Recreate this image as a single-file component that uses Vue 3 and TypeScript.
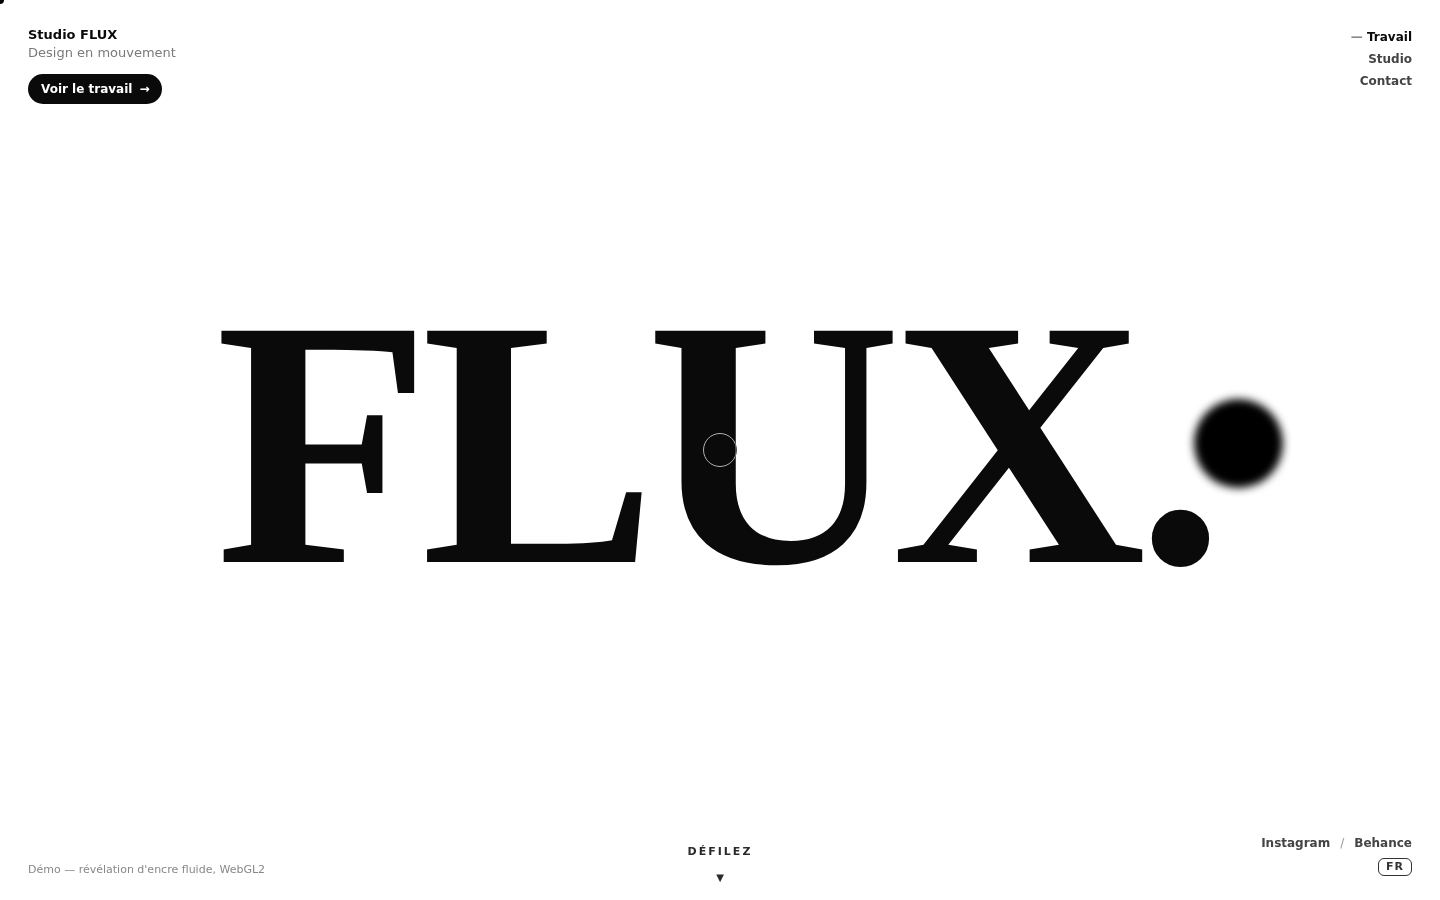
<script setup lang="ts">
import { ref } from 'vue'

interface Item { label: string; href: string }
const sections: Item[] = [
  { label: 'Travail', href: '#travail' },
  { label: 'Studio', href: '#studio' },
  { label: 'Contact', href: '#contact' },
]
const active = ref('Travail')
</script>

<template>
  <main class="page">
    <header class="top">
      <div class="brand">
        <strong class="name">Studio FLUX</strong>
        <span class="tagline">Design en mouvement</span>
        <a class="cta" href="#travail">Voir le travail <span>→</span></a>
      </div>
      <nav class="menu" aria-label="Sections">
        <a
          v-for="item in sections"
          :key="item.label"
          :href="item.href"
          :class="{ active: item.label === active }"
          @click="active = item.label"
        >{{ item.label }}</a>
      </nav>
    </header>

    <h1 class="word">FLUX.</h1>

    <footer class="bottom">
      <p class="note">Démo — révélation d'encre fluide, WebGL2</p>
      <a class="scroll" href="#travail"><span class="label">DÉFILEZ</span><span class="arrow">▼</span></a>
      <div class="end">
        <div class="social">
          <a href="#instagram">Instagram</a><span class="slash">/</span><a href="#behance">Behance</a>
        </div>
        <button class="lang" type="button">FR</button>
      </div>
    </footer>

    <div class="ink" aria-hidden="true"></div>
    <div class="ring" aria-hidden="true"></div>
    <div class="dot" aria-hidden="true"></div>
  </main>
</template>

<style>
body {
  margin: 0;
  background: #fff;
}
</style>

<style scoped>
.page {
  position: relative;
  display: grid;
  grid-template-rows: 1fr auto 1fr;
  box-sizing: border-box;
  min-height: 100vh;
  padding: 24px 28px 15px;
  overflow: hidden;
  background: #fff;
  font-family: "DejaVu Sans", sans-serif;
  color: #0a0a0a;
}
a {
  color: inherit;
  text-decoration: none;
}
.top {
  display: flex;
  justify-content: space-between;
  align-items: flex-start;
}
.brand {
  display: flex;
  flex-direction: column;
  align-items: flex-start;
  padding-top: 2px;
  font-size: 13px;
  line-height: 18px;
}
.tagline { color: #7a7a7a; }
.cta {
  display: flex;
  gap: 7px;
  margin-top: 12px;
  padding: 6px 13px;
  border-radius: 15px;
  background: #0a0a0a;
  color: #fff;
  font-size: 12px;
  font-weight: 700;
}
.menu {
  display: flex;
  flex-direction: column;
  align-items: flex-end;
  gap: 4px;
  padding-top: 4px;
  font-size: 12px;
  line-height: 18px;
  font-weight: 700;
  color: #444;
}
.active { color: #0a0a0a; }
.active::before {
  content: "— ";
  color: #888;
}
.word {
  justify-self: center;
  margin: 0;
  padding: 0 10px 23px 0;
  font-family: "Liberation Serif", serif;
  font-size: 353px;
  line-height: 352px;
  font-weight: 700;
  letter-spacing: -10px;
}
.bottom {
  display: grid;
  grid-template-columns: 1fr auto 1fr;
  align-items: end;
}
.note {
  margin: 0;
  padding-bottom: 8px;
  font-size: 11px;
  line-height: 14px;
  color: #888;
}
.scroll {
  display: flex;
  flex-direction: column;
  align-items: center;
  gap: 12px;
  font-size: 11px;
  line-height: 14px;
  font-weight: 700;
  color: #2a2a2a;
}
.label { letter-spacing: 2px; }
.arrow { font-size: 10px; }
.end {
  display: flex;
  flex-direction: column;
  align-items: flex-end;
  gap: 6px;
  padding-bottom: 9px;
}
.social {
  display: flex;
  gap: 10px;
  font-size: 12px;
  line-height: 18px;
  font-weight: 700;
  color: #444;
}
.slash {
  font-weight: 400;
  color: #999;
}
.lang {
  padding: 1px 7px;
  border: 1px solid #333;
  border-radius: 6px;
  background: #fff;
  color: #333;
  font: 700 11px/14px "DejaVu Sans", sans-serif;
  letter-spacing: 1px;
}
.ink,
.ring,
.dot {
  position: absolute;
  border-radius: 50%;
  pointer-events: none;
}
.ink {
  top: 399px;
  left: 1194px;
  width: 89px;
  height: 89px;
  background: #000;
  filter: blur(4px);
}
.ring {
  top: 50%;
  left: 50%;
  box-sizing: border-box;
  width: 34px;
  height: 34px;
  border: 1px solid #bbb;
  transform: translate(-50%, -50%);
  mix-blend-mode: difference;
}
.dot {
  top: -4px;
  left: -4px;
  width: 8px;
  height: 8px;
  background: #000;
}
</style>
